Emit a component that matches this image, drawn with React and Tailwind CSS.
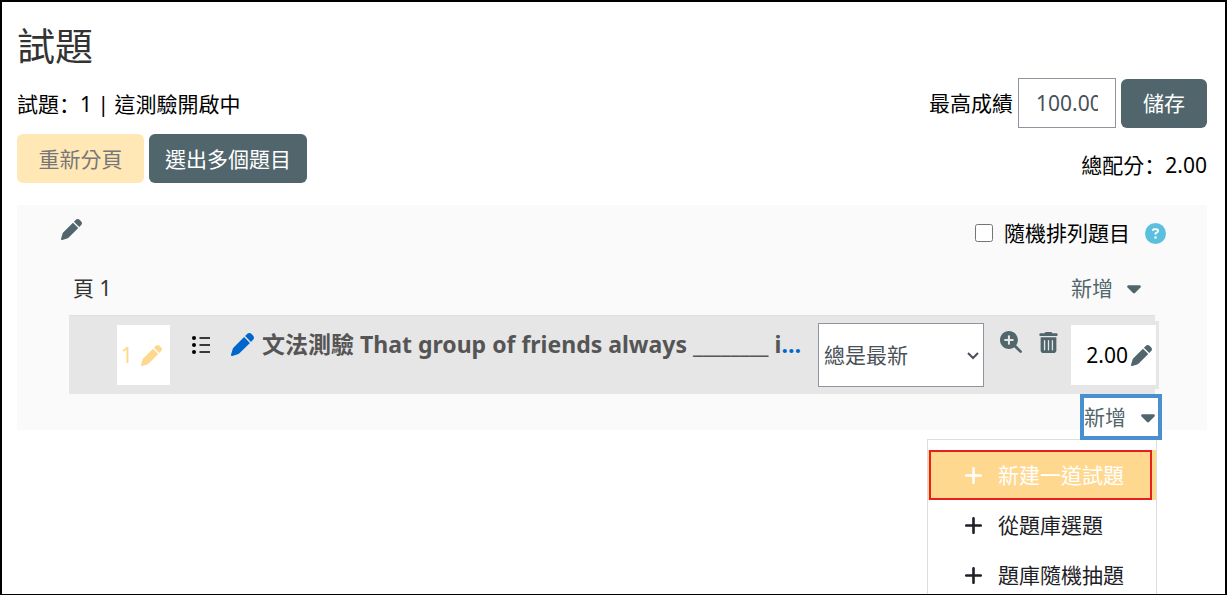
import React from 'react';
import { FaCaretDown, FaCircleQuestion, FaMagnifyingGlassPlus, FaPen, FaPlus, FaTrashCan } from 'react-icons/fa6';

const menuItems = [
    { id: 'new', label: '新建一道試題', active: true },
    { id: 'bank', label: '從題庫選題', active: false },
    { id: 'random', label: '題庫隨機抽題', active: false },
];

const Colon = () => <span className="font-['Noto_Sans_CJK_SC',sans-serif]">：</span>;

const ListIcon = () => (
    <svg width="18" height="18" viewBox="0 0 18 18" aria-hidden="true">
        <circle cx="2" cy="2" r="2" />
        <circle cx="2" cy="9" r="2" />
        <circle cx="2" cy="16" r="2" />
        <path d="M7.5 2h10.500M7.500 9h10.500M7.500 16h10.500" stroke="black" strokeWidth="1.3" />
    </svg>
);

const QuestionRow = () => (
    <div className="mx-[52px] h-[79px] flex items-start bg-[#e6e6e6] border-t border-[#dfdfdf] pl-12">
        <div className="mt-[9px] w-[53px] h-[60px] shrink-0 bg-white flex items-center justify-between pl-1 pr-2 text-[#ffd88f]">
            <span>1</span>
            <button type="button" aria-label="編輯題號">
                <FaPen size={21} />
            </button>
        </div>
        <div className="mt-5 ml-[22px] shrink-0">
            <ListIcon />
        </div>
        <a href="#question" className="mt-2.5 ml-[21px] flex flex-1 min-w-0 items-center gap-2 text-[#0066cc]">
            <FaPen size={23} className="shrink-0" />
            <span className="truncate text-[23px] leading-9 font-bold">
                <span className="text-[#555]">文法測驗 That group of friends always ________ in the park</span>
            </span>
        </a>
        <div className="relative mt-[7px] ml-1 w-[166px] shrink-0">
            <select
                aria-label="版本"
                className="w-full h-16 appearance-none bg-white border border-[#8f959e] pl-[5px] text-[#495057]"
            >
                <option>總是最新</option>
            </select>
            <svg
                className="absolute right-[5px] top-[29px] pointer-events-none"
                width="12"
                height="8"
                viewBox="0 0 12 8"
                fill="none"
                stroke="#495057"
                strokeWidth="2"
                aria-hidden="true"
            >
                <path d="M1 1l5 5 5-5" />
            </svg>
        </div>
        <button type="button" aria-label="預覽試題" className="mt-[15px] ml-4 shrink-0 text-[#51666c]">
            <FaMagnifyingGlassPlus size={22} />
        </button>
        <button type="button" aria-label="刪除" className="mt-4 ml-4 shrink-0 text-[#51666c]">
            <FaTrashCan size={21} />
        </button>
        <div className="mt-[5px] ml-2 -mr-1 w-[92px] h-[68px] shrink-0 bg-white border-4 border-r-[3px] border-[#e6e6e6] flex items-center justify-end gap-[3px] pr-1 text-black">
            <span>2.00</span>
            <button type="button" aria-label="編輯配分" className="text-[#51666c]">
                <FaPen size={21} />
            </button>
        </div>
    </div>
);

const AddMenu = () => (
    <ul className="absolute right-[5px] top-full w-[230px] -mt-px pt-2.5 pb-2.5 bg-white border border-[#ddd]">
        {menuItems.map((item) => (
            <li key={item.id} className={item.active ? 'bg-[#ffd88f] pl-px pr-1' : 'pl-px pr-1'}>
                <button
                    type="button"
                    className={
                        item.active
                            ? 'w-full h-[50px] flex items-center gap-3.5 pl-8 border-2 border-[#e6201c] text-white'
                            : 'w-full h-[50px] flex items-center gap-3.5 pl-8 border-2 border-transparent text-[#1d2125]'
                    }
                >
                    <FaPlus size={21} />
                    <span>{item.label}</span>
                </button>
            </li>
        ))}
    </ul>
);

const App = () => {
    return (
        <main className="h-screen overflow-hidden bg-white border-2 border-b border-black pl-[15px] pr-[18px] pt-[18px] font-['Noto_Sans','Noto_Sans_CJK_TC',sans-serif] text-[21px] leading-8 font-normal text-black">
            <h1 className="text-[38px] leading-[50px] text-[#333]">試題</h1>

            <div className="mt-2 flex items-center justify-between">
                <p>試題<Colon />1 | 這測驗開啟中</p>
                <div className="flex items-center gap-[5px]">
                    <label htmlFor="maxgrade">最高成績</label>
                    <input
                        id="maxgrade"
                        type="text"
                        defaultValue="100.00"
                        className="w-[98px] h-[50px] px-[17px] border border-[#8f959e] text-[#495057]"
                    />
                    <button type="button" className="h-[49px] px-[22px] rounded-md bg-[#51666c] text-white">
                        儲存
                    </button>
                </div>
            </div>

            <div className="mt-1.5 flex items-start justify-between">
                <div className="flex gap-[5px]">
                    <button type="button" disabled className="h-[49px] w-[127px] rounded-md bg-[#ffe7b6] text-[#777]">
                        重新分頁
                    </button>
                    <button type="button" className="h-[49px] w-[158px] rounded-md bg-[#51666c] text-white">
                        選出多個題目
                    </button>
                </div>
                <p className="mt-3.5">總配分<Colon />2.00</p>
            </div>

            <section className="mt-[22px] bg-[#fafafa]">
                <div className="flex items-start justify-between pt-3 pl-11 pr-[41px]">
                    <button type="button" aria-label="編輯標題" className="mt-0.5 text-[#51666c]">
                        <FaPen size={21} />
                    </button>
                    <div className="flex items-center">
                        <input id="shuffle" type="checkbox" className="size-[18px] mr-[11px]" />
                        <label htmlFor="shuffle">隨機排列題目</label>
                        <button type="button" aria-label="說明" className="ml-[15px] text-[#5bc0de]">
                            <FaCircleQuestion size={21} />
                        </button>
                    </div>
                </div>

                <div className="mt-[23px] mb-[11px] flex items-center justify-between pl-14 pr-[66px]">
                    <h2 className="text-[#333]">頁 1</h2>
                    <button type="button" className="flex items-center gap-3.5 text-[#51666c]">
                        新增
                        <FaCaretDown size={22} className="w-3.5" />
                    </button>
                </div>

                <QuestionRow />

                <div className="h-9 flex justify-end pr-[45px]">
                    <div className="relative h-[46px]">
                        <button
                            type="button"
                            aria-expanded="true"
                            className="relative z-10 h-full w-[82px] flex items-center justify-between bg-white border-4 border-[#4a90d0] pr-[3px] text-[#51666c]"
                        >
                            新增
                            <FaCaretDown size={22} className="w-3.5" />
                        </button>
                        <AddMenu />
                    </div>
                </div>
            </section>
        </main>
    );
};

export default App;
